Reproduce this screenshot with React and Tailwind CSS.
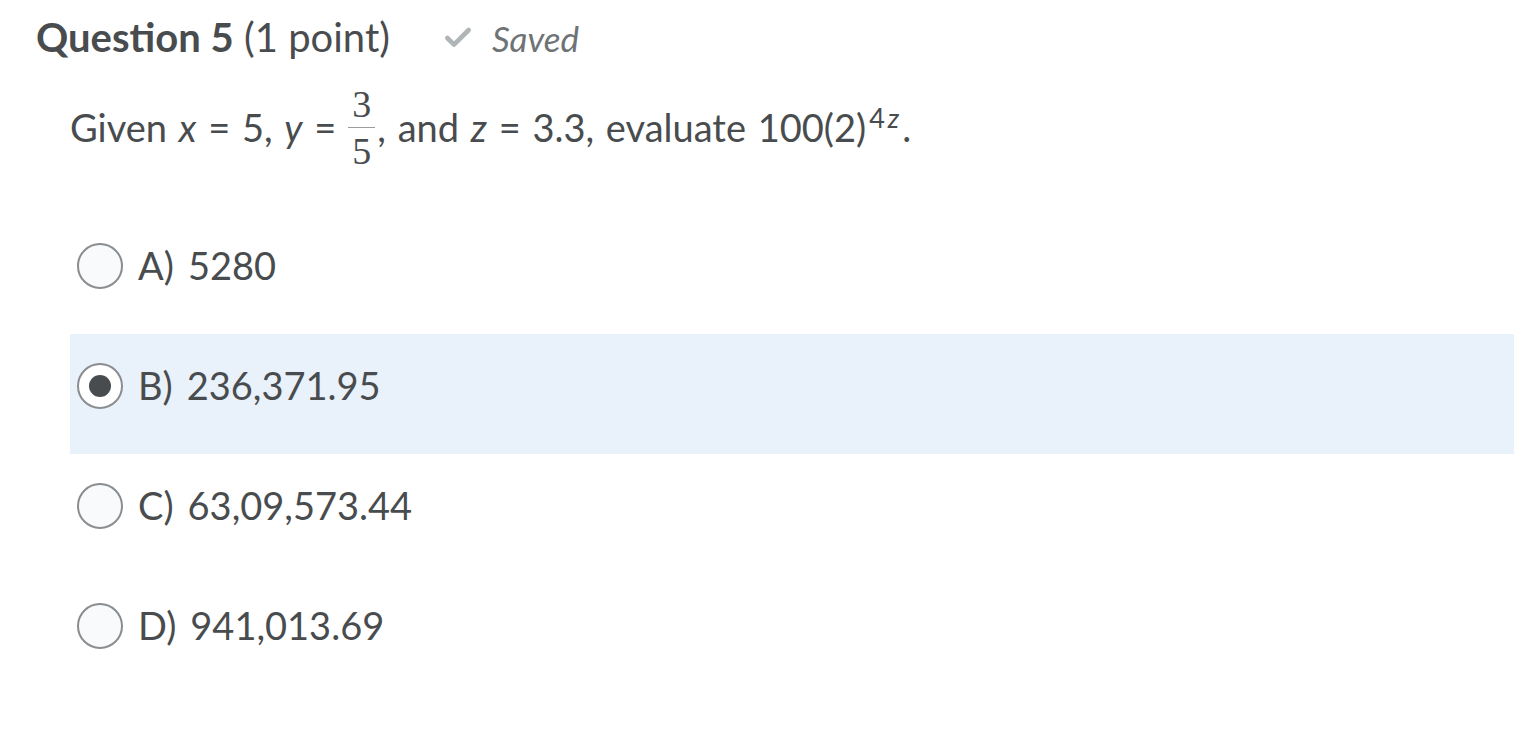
import { Check } from 'lucide-react'

const options = [
  { id: 'A', label: '5280' },
  { id: 'B', label: '236,371.95' },
  { id: 'C', label: '63,09,573.44' },
  { id: 'D', label: '941,013.69' },
]

// Radio circle, filled dot when selected
function Radio({ checked }) {
  return (
    <span
      className={
        'flex h-[46px] w-[46px] shrink-0 items-center justify-center rounded-full border-2 border-[#8a8d90] ' +
        (checked ? 'bg-white' : 'bg-[#f9fafb]')
      }
    >
      {checked && <span className="h-[22px] w-[22px] rounded-full bg-[#494c4e]" />}
    </span>
  )
}

export default function App() {
  const selected = 'B'

  return (
    <div className="min-h-screen bg-white text-[#494c4e] font-['Lato','Liberation_Sans',sans-serif]">
      {/* Header */}
      <div className="flex items-baseline pl-[36px] pt-[12px]">
        <h2 className="text-[40px] leading-[1.2]">
          <span className="font-bold">Question 5</span> <span>(1 point)</span>
        </h2>
        <span className="ml-[52px] flex items-baseline text-[#6e7376]">
          <Check className="mr-[18px] h-[32px] w-[32px] self-center text-[#b0b5b8]" strokeWidth={3.5} />
          <span className="text-[35px] italic">Saved</span>
        </span>
      </div>

      {/* Question */}
      <div className="mt-[20px] flex items-center pl-[70px] text-[38px] [word-spacing:2px]">
        <span>
          Given <i>x</i> = 5, <i>y</i> =
        </span>
        <span className="mr-[2px] ml-[12px] inline-flex flex-col items-center font-['Liberation_Serif',serif] text-[38px] leading-[1]">
          <span className="pb-[4px]">3</span>
          <span className="h-[1px] w-[27px] bg-[#9a9da0]" />
          <span className="pt-[4px]">5</span>
        </span>
        <span>
          , and <i>z</i> = 3.3, evaluate 100(2)
          <sup className="ml-[3px] text-[27px] [word-spacing:0]">
            4<i className="ml-[3px]">z</i>
          </sup>
          <span className="ml-[3px]">.</span>
        </span>
      </div>

      {/* Options */}
      <div className="mt-[44px] pr-[14px] pl-[70px]">
        {options.map((opt) => (
          <div
            key={opt.id}
            className={
              'flex h-[120px] items-center pb-[16px] pl-[7px] ' +
              (selected === opt.id ? 'bg-[#e9f1fa]' : '')
            }
          >
            <Radio checked={selected === opt.id} />
            <span className="ml-[15px] text-[38px]">{opt.id})</span>
            <span className="ml-[14px] text-[38px]">{opt.label}</span>
          </div>
        ))}
      </div>
    </div>
  )
}
